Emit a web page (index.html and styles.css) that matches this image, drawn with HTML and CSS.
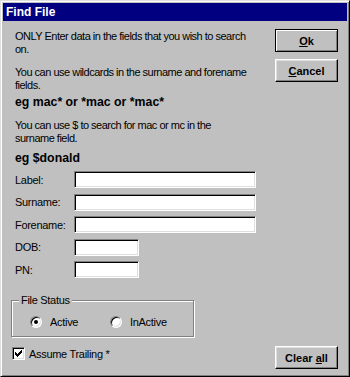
FILE: index.html
```html
<!DOCTYPE html>
<html>
<head>
<meta charset="utf-8">
<link rel="stylesheet" href="styles.css">
</head>
<body>
<div class="window">
  <div class="titlebar">Find File</div>
  <div class="client">
    <div class="main">
      <p class="note n1">ONLY Enter data in the fields that you wish to search<br>on.</p>
      <p class="note n2">You can use wildcards in the surname and forename<br>fields.</p>
      <p class="example e1">eg mac* or *mac or *mac*</p>
      <p class="note n3">You can use $ to search for mac or mc in the<br>surname field.</p>
      <p class="example e2">eg $donald</p>
      <div class="form">
        <div class="row"><span class="lbl">Label:</span><input class="field wide" type="text"></div>
        <div class="row"><span class="lbl">Surname:</span><input class="field wide" type="text"></div>
        <div class="row"><span class="lbl">Forename:</span><input class="field wide" type="text"></div>
        <div class="row"><span class="lbl">DOB:</span><input class="field short" type="text"></div>
        <div class="row"><span class="lbl">PN:</span><input class="field short" type="text"></div>
      </div>
      <fieldset class="group">
        <legend class="legend">File Status</legend>
        <div class="radios">
          <div class="radio-item"><span class="radio on"></span><span>Active</span></div>
          <div class="radio-item"><span class="radio"></span><span>InActive</span></div>
        </div>
      </fieldset>
      <div class="check-row">
        <span class="checkbox"><svg width="7" height="7" viewBox="0 0 7 7" shape-rendering="crispEdges"><path d="M0 2h1v3H0z M1 3h1v3H1z M2 4h1v3H2z M3 3h1v3H3z M4 2h1v3H4z M5 1h1v3H5z M6 0h1v3H6z" fill="#000"/></svg></span>
        <span>Assume Trailing *</span>
      </div>
    </div>
    <div class="buttons">
      <button class="btn default"><u>O</u>k</button>
      <button class="btn cancel"><u>C</u>ancel</button>
      <button class="btn clear">Clear <u>a</u>ll</button>
    </div>
  </div>
</div>
</body>
</html>
```
FILE: styles.css
```css
html, body {
  margin: 0;
  padding: 0;
  background: #c0c0c0;
}
body {
  font-family: "Liberation Sans", Arial, sans-serif;
  font-size: 11px;
  color: #000;
}
.window {
  width: 350px;
  height: 377px;
  box-sizing: border-box;
  border: 1px solid;
  border-color: #dfdfdf #000 #000 #dfdfdf;
  box-shadow: inset 1px 1px #fff, inset -1px -1px #808080;
  padding: 2px;
  background: #c0c0c0;
  display: flex;
  flex-direction: column;
}
.titlebar {
  height: 18px;
  line-height: 18px;
  background: #000080;
  color: #fff;
  font-weight: bold;
  font-size: 12px;
  padding-left: 3px;
  flex: none;
}
.client {
  flex: 1;
  display: flex;
  padding: 0 9px 5px 8px;
}
.main {
  flex: 1;
  display: flex;
  flex-direction: column;
  padding-top: 9px;
}
.note {
  margin: 0;
  padding-left: 4px;
  line-height: 13px;
  white-space: nowrap;
  letter-spacing: -0.5px;
}
.n2 { margin-top: 10px; }
.n3 { margin-top: 9px; }
.example {
  margin: 3px 0 0;
  padding-left: 4px;
  font-weight: bold;
  font-size: 12.3px;
  line-height: 15px;
  white-space: nowrap;
}
.e2 { margin-top: 6px; }
.form {
  margin-top: 5px;
  display: flex;
  flex-direction: column;
  gap: 5.5px;
}
.row {
  display: flex;
  align-items: center;
  height: 17px;
}
.lbl {
  width: 59px;
  padding-left: 4px;
  letter-spacing: -0.3px;
}
.field {
  box-sizing: border-box;
  height: 17px;
  margin: 0;
  padding: 0 2px;
  border: 1px solid;
  border-color: #808080 #fff #fff #808080;
  box-shadow: inset 1px 1px #000, inset -1px -1px #dfdfdf;
  background: #fff;
  outline: none;
  font: inherit;
}
.wide { width: 182px; }
.short { width: 65px; }
.group {
  margin: 16px 0 0;
  width: 183px;
  box-sizing: border-box;
  padding: 9px 0 8px 18px;
  border: 1px solid #808080;
  box-shadow: inset 1px 1px #fff, 1px 1px #fff;
  min-width: 0;
}
.legend {
  margin-left: -11px;
  padding: 0 2px;
  line-height: 12px;
  background: #c0c0c0;
  letter-spacing: -0.3px;
}
.radios {
  display: flex;
  height: 13px;
  align-items: center;
}
.radio-item {
  display: flex;
  align-items: center;
  gap: 8px;
  width: 80px;
  letter-spacing: -0.3px;
}
.radio {
  width: 12px;
  height: 12px;
  box-sizing: border-box;
  border-radius: 50%;
  border: 1px solid;
  border-color: #808080 #fff #fff #808080;
  box-shadow: inset 1px 1px #000, inset -1px -1px #dfdfdf;
  background: #fff;
  display: flex;
  align-items: center;
  justify-content: center;
}
.radio.on::after {
  content: "";
  width: 4px;
  height: 4px;
  border-radius: 50%;
  background: #000;
}
.check-row {
  margin-top: 10px;
  margin-left: 1px;
  display: flex;
  align-items: center;
  gap: 4px;
  letter-spacing: -0.3px;
}
.checkbox {
  width: 13px;
  height: 13px;
  box-sizing: border-box;
  border: 1px solid;
  border-color: #808080 #fff #fff #808080;
  box-shadow: inset 1px 1px #000, inset -1px -1px #dfdfdf;
  background: #fff;
  display: flex;
  align-items: center;
  justify-content: center;
}
.buttons {
  width: 63px;
  display: flex;
  flex-direction: column;
  padding-top: 8px;
  gap: 7px;
}
.btn {
  width: 63px;
  height: 23px;
  box-sizing: border-box;
  margin: 0;
  padding: 0;
  font-family: "Liberation Sans", Arial, sans-serif;
  font-size: 11px;
  font-weight: bold;
  color: #000;
  background: #c0c0c0;
  border: 1px solid;
  border-color: #fff #000 #000 #fff;
  box-shadow: inset -1px -1px #808080, inset 1px 1px #dfdfdf;
}
.btn.default {
  border-color: #000;
  box-shadow: inset 1px 1px #fff, inset -1px -1px #808080;
}
.btn.clear {
  margin-top: auto;
}
```
